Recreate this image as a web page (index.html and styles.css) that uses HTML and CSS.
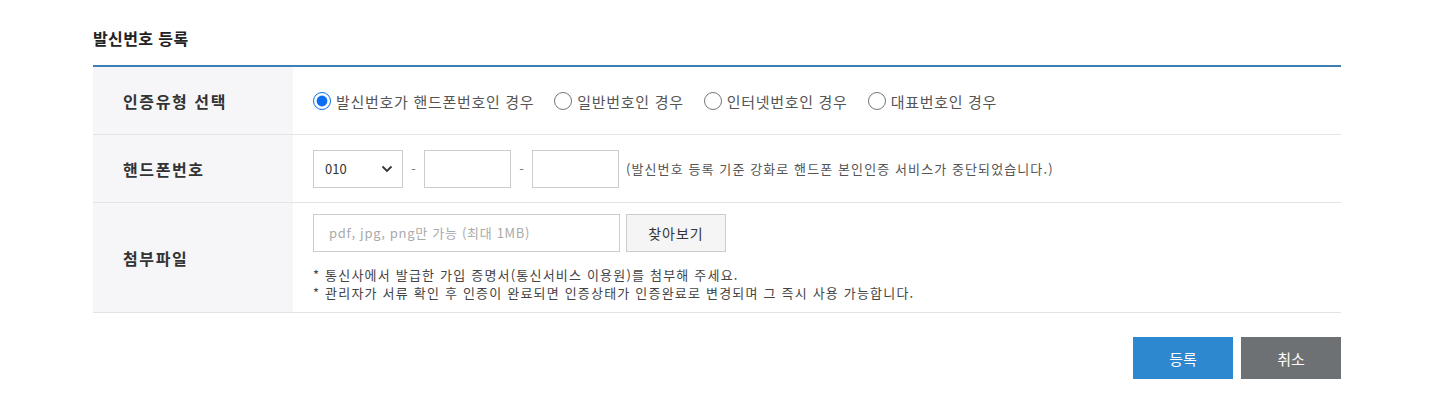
FILE: index.html
```html
<!DOCTYPE html>
<html lang="ko">
  <head>
    <meta charset="UTF-8" />
    <title>발신번호 등록</title>
    <link rel="stylesheet" href="styles.css">
  </head>
  <body>
    <div class="wrap">
      <h2 class="title">발신번호 등록</h2>

      <table class="form">
        <tr class="row-type">
          <th>인증유형 선택</th>
          <td>
            <div class="radios">
              <label class="radio"><input type="radio" name="type" checked />발신번호가 핸드폰번호인 경우</label>
              <label class="radio"><input type="radio" name="type" />일반번호인 경우</label>
              <label class="radio"><input type="radio" name="type" />인터넷번호인 경우</label>
              <label class="radio"><input type="radio" name="type" />대표번호인 경우</label>
            </div>
          </td>
        </tr>
        <tr class="row-phone">
          <th>핸드폰번호</th>
          <td>
            <div class="phone">
              <div class="select">
                <span>010</span>
                <svg width="12" height="8" viewBox="0 0 12 8"><path d="M1.5 1.5 L6 6 L10.5 1.5" fill="none" stroke="#333" stroke-width="1.8"/></svg>
              </div>
              <span class="dash">-</span>
              <input class="num" />
              <span class="dash">-</span>
              <input class="num" />
              <span class="notice">(발신번호 등록 기준 강화로 핸드폰 본인인증 서비스가 중단되었습니다.)</span>
            </div>
          </td>
        </tr>
        <tr class="row-file">
          <th>첨부파일</th>
          <td>
            <div class="file">
              <input class="file-name" placeholder="pdf, jpg, png만 가능 (최대 1MB)" />
              <button class="browse">찾아보기</button>
            </div>
            <p class="help">* 통신사에서 발급한 가입 증명서(통신서비스 이용원)를 첨부해 주세요.</p>
            <p class="help">* 관리자가 서류 확인 후 인증이 완료되면 인증상태가 인증완료로 변경되며 그 즉시 사용 가능합니다.</p>
          </td>
        </tr>
      </table>

      <div class="actions">
        <button class="btn btn-ok">등록</button>
        <button class="btn btn-cancel">취소</button>
      </div>
    </div>
  </body>
</html>
```

FILE: styles.css
```css
body {
  margin: 0;
  font-family: "Noto Sans CJK KR", "Noto Sans", sans-serif;
  color: #333;
  background: #fff;
}

.wrap {
  width: 1248px;
  margin-left: 93px;
  padding-top: 26px;
}

.title {
  margin: 0 0 15px 0;
  font-size: 16px;
  font-weight: 700;
  line-height: 24px;
  letter-spacing: 0.4px;
  color: #222;
}

.form {
  width: 100%;
  border-collapse: collapse;
  border-top: 2px solid #3b7fb5;
}

.form th {
  width: 200px;
  padding: 0 0 0 30px;
  box-sizing: border-box;
  background: #f6f6f8;
  text-align: left;
  font-size: 16px;
  font-weight: 700;
  letter-spacing: 1.6px;
  color: #333;
  border-bottom: 1px solid #e3e3e3;
}

.form td {
  padding: 0 0 0 20px;
  border-bottom: 1px solid #e3e3e3;
}

.row-type th,
.row-type td {
  height: 67px;
}

.row-phone th,
.row-phone td {
  height: 67px;
}

.row-file th,
.row-file td {
  height: 109px;
}

.radios {
  display: flex;
  gap: 20px;
  padding-top: 1px;
}

.radio {
  display: flex;
  align-items: center;
  font-size: 15px;
  letter-spacing: 0.7px;
  color: #555;
}

.radio input {
  width: 18px;
  height: 18px;
  margin: 0 5px 0 0;
  accent-color: #0b6ef2;
}

.phone {
  display: flex;
  align-items: center;
}

.select {
  width: 90px;
  height: 38px;
  box-sizing: border-box;
  border: 1px solid #ccc;
  display: flex;
  align-items: center;
  justify-content: space-between;
  padding: 0 9px 0 11px;
  font-size: 13px;
  color: #333;
}

.dash {
  width: 21px;
  text-align: center;
  font-size: 13px;
  color: #777;
}

.num {
  width: 87px;
  height: 38px;
  box-sizing: border-box;
  border: 1px solid #ccc;
  padding: 0 8px;
  margin: 0;
}

.notice {
  margin-left: 7px;
  font-size: 13px;
  letter-spacing: 1.1px;
  color: #555;
}

.file {
  display: flex;
  gap: 6px;
  margin-bottom: 14px;
}

.file-name {
  width: 307px;
  height: 38px;
  box-sizing: border-box;
  border: 1px solid #ccc;
  padding: 0 15px;
  margin: 0;
  font-family: inherit;
  font-size: 13px;
  letter-spacing: 0.7px;
}

.file-name::placeholder {
  color: #aaa;
}

.browse {
  width: 100px;
  height: 38px;
  border: 1px solid #ccc;
  background: #f5f5f5;
  font-family: inherit;
  font-size: 14px;
  letter-spacing: 1px;
  color: #333;
}

.help {
  margin: 0;
  font-size: 13px;
  line-height: 18px;
  letter-spacing: 1.2px;
  color: #444;
}

.actions {
  display: flex;
  justify-content: flex-end;
  gap: 8px;
  margin-top: 24px;
}

.btn {
  width: 100px;
  height: 42px;
  border: 0;
  color: #fff;
  font-family: inherit;
  font-size: 15px;
}

.btn-ok {
  background: #2e88d0;
}

.btn-cancel {
  background: #6e7173;
}
```
